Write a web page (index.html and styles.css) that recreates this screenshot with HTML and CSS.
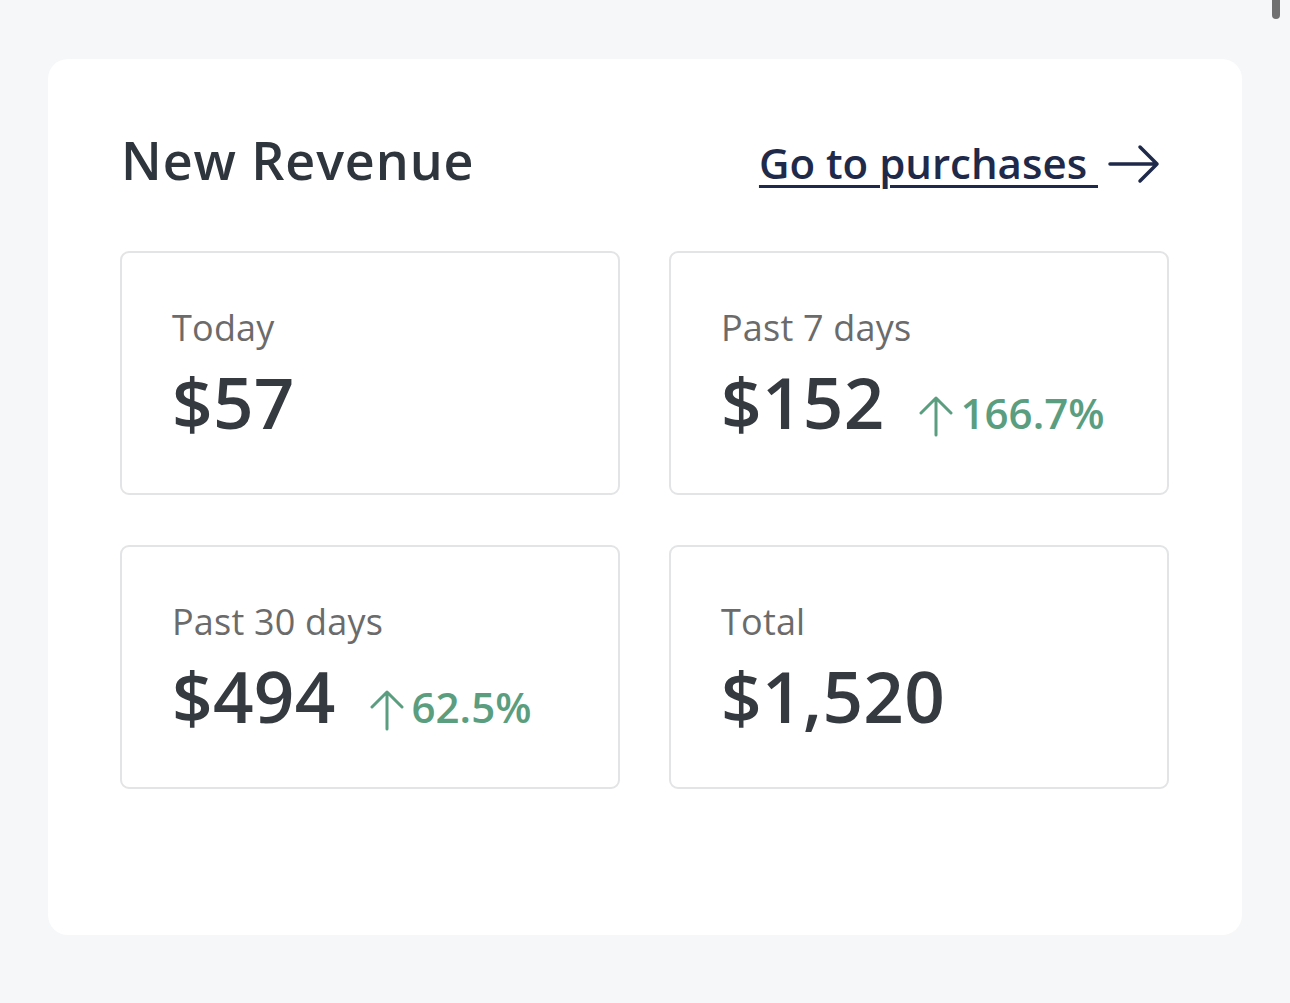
FILE: index.html
```html
<!DOCTYPE html>
<html>
<head>
<meta charset="utf-8">
<link rel="stylesheet" href="styles.css">
</head>
<body>
<div class="scrollthumb"></div>
<main class="card">
  <header class="card-head">
    <h1 class="title">New Revenue</h1>
    <a class="link" href="#"><span class="link-text">Go to purchases </span><svg class="link-arrow" width="52" height="44" viewBox="0 0 52 44"><path d="M2 22H49M32 5L49 22L32 39" fill="none" stroke="#1f2a4a" stroke-width="3.5" stroke-linecap="round" stroke-linejoin="round"/></svg></a>
  </header>
  <section class="grid">
    <div class="tile">
      <div class="label">Today</div>
      <div class="value-row"><span class="value">$57</span></div>
    </div>
    <div class="tile">
      <div class="label">Past 7 days</div>
      <div class="value-row"><span class="value">$152</span><span class="delta"><svg class="up" width="34" height="42" viewBox="0 0 34 42"><path d="M17 40V3M2 18L17 3L32 18" fill="none" stroke="#5a9e7f" stroke-width="3" stroke-linecap="round" stroke-linejoin="round"/></svg>166.7%</span></div>
    </div>
    <div class="tile">
      <div class="label">Past 30 days</div>
      <div class="value-row"><span class="value">$494</span><span class="delta"><svg class="up" width="34" height="42" viewBox="0 0 34 42"><path d="M17 40V3M2 18L17 3L32 18" fill="none" stroke="#5a9e7f" stroke-width="3" stroke-linecap="round" stroke-linejoin="round"/></svg>62.5%</span></div>
    </div>
    <div class="tile">
      <div class="label">Total</div>
      <div class="value-row"><span class="value">$1,520</span></div>
    </div>
  </section>
</main>
</body>
</html>
```
FILE: styles.css
```css
html, body {
  margin: 0;
  padding: 0;
  background: #f6f7f9;
  font-family: "Open Sans", "Noto Sans", sans-serif;
}
body {
  padding: 59px 48px 68px 48px;
}
.scrollthumb {
  position: absolute;
  top: -6px;
  left: 1272px;
  width: 8px;
  height: 25px;
  border-radius: 4px;
  background: #707070;
}
.card {
  background: #ffffff;
  border-radius: 20px;
  padding: 66px 82px 144px 72px;
  height: 876px;
  box-sizing: border-box;
}
.card-head {
  display: flex;
  justify-content: space-between;
  height: 126px;
  align-items: flex-start;
}
.title {
  margin: 0;
  font-size: 52px;
  font-weight: 600;
  color: #2f353d;
  line-height: 70px;
  padding-left: 1px;
  letter-spacing: 0.9px;
}
.link {
  display: flex;
  align-items: center;
  color: #1f2a4a;
  text-decoration: none;
  margin-top: 8px;
}
.link-text {
  font-size: 42px;
  font-weight: 600;
  text-decoration: underline;
  text-decoration-thickness: 3px;
  text-underline-offset: 6px;
  white-space: pre;
  line-height: 60px;
}
.link-arrow {
  margin-left: 10px;
  margin-top: 2px;
}
.grid {
  display: grid;
  grid-template-columns: 500px 500px;
  column-gap: 49px;
  row-gap: 50px;
  margin-right: -9px;
}
.tile {
  border: 2px solid #e3e4e6;
  border-radius: 9px;
  height: 244px;
  box-sizing: border-box;
  padding: 52px 50px 0 50px;
}
.label {
  font-size: 36px;
  font-weight: 500;
  color: #6b6b6b;
  line-height: 46px;
  letter-spacing: 0.2px;
}
.value-row {
  display: flex;
  align-items: baseline;
  margin-top: 6px;
}
.value {
  font-size: 71px;
  font-weight: 600;
  color: #353a40;
  line-height: 90px;
  letter-spacing: 0.3px;
}
.delta {
  display: inline-flex;
  align-items: baseline;
  margin-left: 34px;
  font-size: 42px;
  font-weight: 600;
  color: #5a9e7f;
}
.up {
  margin-right: 8px;
  align-self: center;
  position: relative;
  top: 3px;
}
```
